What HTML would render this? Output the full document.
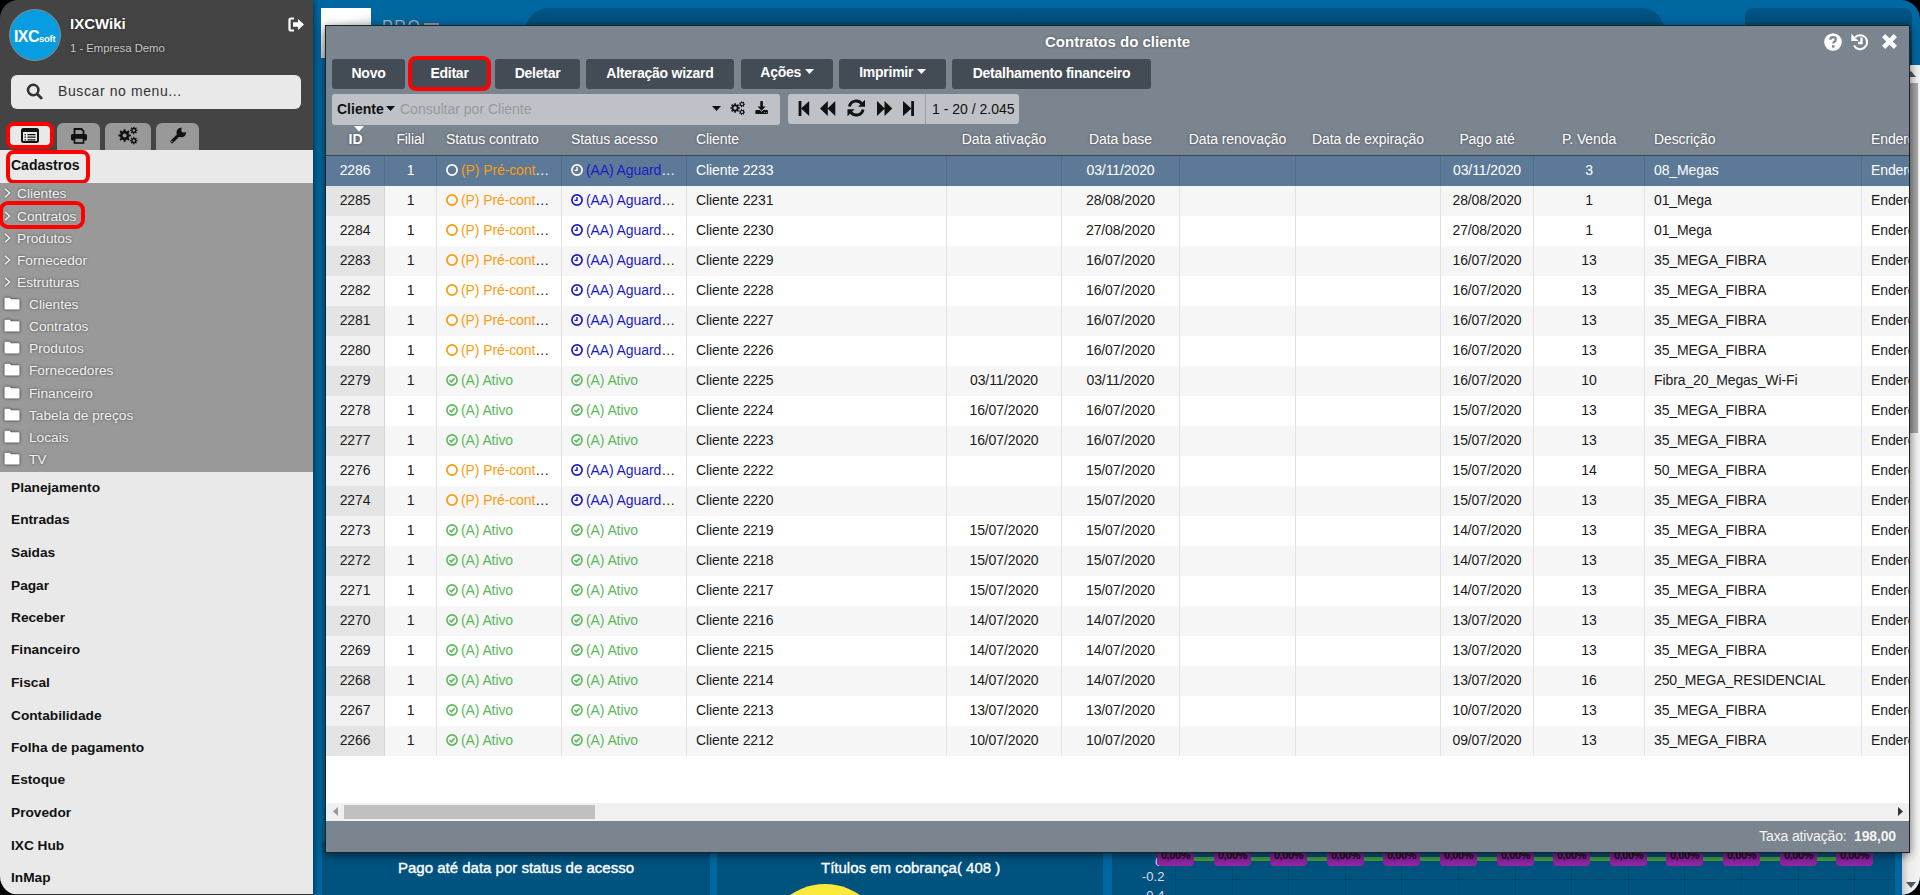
<!DOCTYPE html>
<html><head><meta charset="utf-8">
<style>
*{box-sizing:border-box}
html,body{margin:0;padding:0;width:1920px;height:895px;overflow:hidden;background:#000;font-family:"Liberation Sans",sans-serif}
#scr{position:absolute;left:0;top:0;width:1920px;height:895px;border-radius:19px;overflow:hidden;background:#0067a0}
.abs{position:absolute}
/* sidebar */
#side{position:absolute;left:0;top:0;width:313px;height:895px;background:#444;box-shadow:0 0 7px rgba(0,0,0,.7)}
.logo{position:absolute;left:9px;top:9px;width:52px;height:52px;border-radius:50%;background:#089ce0;border:1px solid #8a8a8a}
.si{position:absolute;font-size:13.7px;color:#f2f2f2;line-height:18px;text-shadow:0 0 3px rgba(0,0,0,.55);white-space:nowrap}
.chev{position:absolute;left:4px;filter:drop-shadow(0 0 1px rgba(0,0,0,.5))}
.fold{position:absolute;left:4px;width:16px;height:13px;filter:drop-shadow(0 0.5px 1.5px rgba(0,0,0,.75))}
.fold svg{display:block}
.mi{position:absolute;left:11px;font-size:13.7px;font-weight:bold;color:#111;line-height:18px;white-space:nowrap}
.tab{position:absolute;top:123px;height:27px;border-radius:6px 6px 0 0;background:#999}
/* modal */
#modal{position:absolute;left:325px;top:25px;width:1585px;height:828px;background:#7b858f;border:1px solid #1d2227;box-shadow:0 2px 9px rgba(0,0,0,.55)}
.btn{position:absolute;top:33px;height:30px;background:#434b55;border-radius:3px;color:#fff;font-size:14px;font-weight:bold;text-align:center;line-height:29px;white-space:nowrap;letter-spacing:-0.25px}
.h{position:absolute;top:0;height:30px;border-left:1px solid transparent;line-height:28px;font-size:14px;letter-spacing:-0.1px;color:#fff;text-shadow:0 0 3px rgba(0,0,0,.45);white-space:nowrap;overflow:hidden}
.c{position:absolute;top:0;height:30px;line-height:29px;font-size:14px;letter-spacing:-0.1px;color:#1a1a1a;white-space:nowrap;overflow:hidden;text-overflow:ellipsis}
.bl{border-left:1px solid #e2e2e2}
.b1{border-left-color:#d6d6d6}
.ctr{text-align:center}
.lft{text-align:left;padding:0 9px}
.b{font-weight:bold}
.row{position:absolute;left:0;width:1600px;height:30px}
.odd{background:#f6f6f6}
.even{background:#fff}
.odd .idc{background:#e4e4e4}
.even .idc{background:#f1f1f1}
.sel{background:#5c7997}
.sel .c{color:#fff;border-left-color:#526e8b}
.ic{display:inline-block;vertical-align:-1px;margin-right:3px}
.plab{position:absolute;top:846px;width:37px;height:20px;border-radius:4px;background:linear-gradient(#6f1a86,#9526a8);color:#111;font-size:11px;font-weight:bold;text-align:center;line-height:18px;letter-spacing:-0.4px}
</style></head><body>
<div id="scr">
  <!-- dashboard background -->
  <div class="abs" style="left:526px;top:8px;width:1138px;height:60px;border-radius:22px 22px 0 0;background:linear-gradient(#015586,#003a5a)"></div>
  <div class="abs" style="left:1745px;top:8px;width:167px;height:60px;border-radius:8px 8px 0 0;background:linear-gradient(#015586,#003a5a)"></div>
  <div class="abs" style="left:321px;top:8px;width:50px;height:50px;background:linear-gradient(160deg,#fff 30%,#b5b5b5)"></div>
  <div class="abs" style="left:382px;top:17px;font-size:16px;line-height:20px;color:#a9b0b8;letter-spacing:1.6px;white-space:nowrap">PRO</div><div class="abs" style="left:424px;top:23px;width:15px;height:2px;background:#8f98a2"></div>
  <div class="abs" style="left:322px;top:840px;width:388px;height:70px;border-radius:4px;background:#00527f"></div>
  <div class="abs" style="left:717px;top:840px;width:386px;height:70px;border-radius:4px;background:#00527f"></div>
  <div class="abs" style="left:1112px;top:840px;width:783px;height:70px;border-radius:4px;background:#00527f"></div>
  <div class="abs" style="left:398px;top:859px;font-size:15px;color:#fff;white-space:nowrap;-webkit-text-stroke:0.35px #fff">Pago até data por status de acesso</div>
  <div class="abs" style="left:821px;top:859px;font-size:15px;color:#fff;white-space:nowrap;-webkit-text-stroke:0.35px #fff">Títulos em cobrança( 408 )</div>
  <div class="abs" style="left:764px;top:884px;width:122px;height:122px;border-radius:50%;background:#fde93a"></div>
  <div style="position:absolute;left:1175px;top:852px;width:1px;height:43px;background:rgba(0,0,0,0.12)"></div><div style="position:absolute;left:1232px;top:852px;width:1px;height:43px;background:rgba(0,0,0,0.12)"></div><div style="position:absolute;left:1288px;top:852px;width:1px;height:43px;background:rgba(0,0,0,0.12)"></div><div style="position:absolute;left:1345px;top:852px;width:1px;height:43px;background:rgba(0,0,0,0.12)"></div><div style="position:absolute;left:1401px;top:852px;width:1px;height:43px;background:rgba(0,0,0,0.12)"></div><div style="position:absolute;left:1458px;top:852px;width:1px;height:43px;background:rgba(0,0,0,0.12)"></div><div style="position:absolute;left:1515px;top:852px;width:1px;height:43px;background:rgba(0,0,0,0.12)"></div><div style="position:absolute;left:1571px;top:852px;width:1px;height:43px;background:rgba(0,0,0,0.12)"></div><div style="position:absolute;left:1628px;top:852px;width:1px;height:43px;background:rgba(0,0,0,0.12)"></div><div style="position:absolute;left:1684px;top:852px;width:1px;height:43px;background:rgba(0,0,0,0.12)"></div><div style="position:absolute;left:1741px;top:852px;width:1px;height:43px;background:rgba(0,0,0,0.12)"></div><div style="position:absolute;left:1798px;top:852px;width:1px;height:43px;background:rgba(0,0,0,0.12)"></div><div style="position:absolute;left:1854px;top:852px;width:1px;height:43px;background:rgba(0,0,0,0.12)"></div>
  <div class="abs" style="left:1175px;top:879px;width:720px;height:1px;background:rgba(0,0,0,0.12)"></div>
  <div class="abs" style="left:1175px;top:857px;width:695px;height:4px;background:#479a3a"></div>
  <div class="abs" style="left:1155px;top:854px;font-size:13px;color:#dde;white-space:nowrap">0</div>
  <div class="plab" style="left:1157px">0,00%</div><div class="plab" style="left:1214px">0,00%</div><div class="plab" style="left:1270px">0,00%</div><div class="plab" style="left:1327px">0,00%</div><div class="plab" style="left:1383px">0,00%</div><div class="plab" style="left:1440px">0,00%</div><div class="plab" style="left:1497px">0,00%</div><div class="plab" style="left:1553px">0,00%</div><div class="plab" style="left:1610px">0,00%</div><div class="plab" style="left:1666px">0,00%</div><div class="plab" style="left:1723px">0,00%</div><div class="plab" style="left:1780px">0,00%</div><div class="plab" style="left:1836px">0,00%</div>
  <div class="abs" style="left:1142px;top:869px;font-size:13px;color:#dde;white-space:nowrap">-0.2</div>
  <div class="abs" style="left:1142px;top:888px;font-size:13px;color:#dde;white-space:nowrap">-0.4</div>
  <!-- page scrollbar -->
  <div class="abs" style="left:1902px;top:65px;width:18px;height:830px;background:linear-gradient(90deg,#c8c8c8,#ececec 40%,#f4f4f4)"></div>
  <svg class="abs" style="left:1906px;top:71px" width="10" height="6" viewBox="0 0 10 6"><path d="M0 6H10L5 0Z" fill="#555"/></svg>
  <svg class="abs" style="left:1906px;top:882px" width="10" height="6" viewBox="0 0 10 6"><path d="M0 0H10L5 6Z" fill="#555"/></svg>
  <div class="abs" style="left:1904px;top:83px;width:14px;height:350px;background:linear-gradient(90deg,#8e8e8e,#a9a9a9)"></div>

  <!-- sidebar -->
  <div id="side">
    <div class="logo"></div>
    <div class="abs" style="left:14px;top:29px;width:46px;font-size:16px;line-height:16px;font-weight:bold;color:#fff;letter-spacing:-0.6px;white-space:nowrap">IXC<span style="font-size:9.5px;font-weight:bold;letter-spacing:-0.2px">soft</span></div>
    <div class="abs" style="left:70px;top:15px;font-size:15px;font-weight:bold;color:#fff;text-shadow:0 0 3px rgba(0,0,0,.6)">IXCWiki</div>
    <div class="abs" style="left:70px;top:42px;font-size:11.3px;color:#c8c8c8;text-shadow:0 0 3px rgba(0,0,0,.6);white-space:nowrap">1 - Empresa Demo</div>
    <svg class="abs" style="left:288px;top:17px" width="17" height="15" viewBox="0 0 17 15"><path d="M6 1.5H3Q1.5 1.5 1.5 3V12Q1.5 13.5 3 13.5H6" fill="none" stroke="#fff" stroke-width="2.2"/><path d="M5 5.3H10V2L16 7.5L10 13V9.7H5Z" fill="#fff"/></svg>
    <div class="abs" style="left:11px;top:75px;width:290px;height:34px;border-radius:6px;background:#e9e9e9"></div>
    <svg class="abs" style="left:26px;top:83px" width="17" height="17" viewBox="0 0 17 17"><circle cx="7.2" cy="7" r="5.2" fill="none" stroke="#333" stroke-width="2.6"/><path d="M11.2 11L15.2 15" stroke="#333" stroke-width="2.8" stroke-linecap="round"/></svg>
    <div class="abs" style="left:58px;top:83px;font-size:14px;color:#333;letter-spacing:0.6px;white-space:nowrap">Buscar no menu...</div>
    <!-- tabs -->
    <div class="tab" style="left:57px;width:43px"></div>
    <div class="tab" style="left:105px;width:46px"></div>
    <div class="tab" style="left:156px;width:43px"></div>
    <div class="abs" style="left:6px;top:122px;width:48px;height:27px;border:4px solid #f00;border-radius:8px;background:#e9e9e9"></div>
    <svg class="abs" style="left:21px;top:128px" width="18" height="15" viewBox="0 0 18 15"><rect x="1" y="1" width="16" height="13" rx="1.5" fill="none" stroke="#111" stroke-width="2"/><rect x="1" y="1" width="16" height="3" fill="#111"/><path d="M3.5 6.6H4.8M6.5 6.6H14.5M3.5 9.2H4.8M6.5 9.2H14.5M3.5 11.8H4.8M6.5 11.8H14.5" stroke="#111" stroke-width="1.3"/></svg>
    <svg class="abs" style="left:70px;top:128px" width="18" height="16" viewBox="0 0 18 16"><path d="M4.5 6V1H11.5L13.5 3V6" fill="none" stroke="#111" stroke-width="1.8"/><rect x="1" y="6" width="16" height="6.5" rx="1.5" fill="#111"/><rect x="4.5" y="10" width="9" height="5" fill="#999" stroke="#111" stroke-width="1.6"/></svg>
    <svg class="abs" style="left:118px;top:126px" width="20" height="19" viewBox="0 0 20 19"><path d="M11.08 8.46 L12.81 8.47 L12.81 10.53 L11.08 10.54 L10.50 11.93 L11.73 13.16 L10.26 14.63 L9.03 13.40 L7.64 13.98 L7.63 15.71 L5.57 15.71 L5.56 13.98 L4.17 13.40 L2.94 14.63 L1.47 13.16 L2.70 11.93 L2.12 10.54 L0.39 10.53 L0.39 8.47 L2.12 8.46 L2.70 7.07 L1.47 5.84 L2.94 4.37 L4.17 5.60 L5.56 5.02 L5.57 3.29 L7.63 3.29 L7.64 5.02 L9.03 5.60 L10.26 4.37 L11.73 5.84 L10.50 7.07Z" fill="#111"/><circle cx="6.6" cy="9.5" r="2.0" fill="#999"/><path d="M18.43 3.79 L19.55 3.78 L19.55 5.02 L18.43 5.01 L18.09 5.83 L18.89 6.61 L18.01 7.49 L17.23 6.69 L16.41 7.03 L16.42 8.15 L15.18 8.15 L15.19 7.03 L14.37 6.69 L13.59 7.49 L12.71 6.61 L13.51 5.83 L13.17 5.01 L12.05 5.02 L12.05 3.78 L13.17 3.79 L13.51 2.97 L12.71 2.19 L13.59 1.31 L14.37 2.11 L15.19 1.77 L15.18 0.65 L16.42 0.65 L16.41 1.77 L17.23 2.11 L18.01 1.31 L18.89 2.19 L18.09 2.97Z" fill="#111"/><circle cx="15.8" cy="4.4" r="1.2" fill="#999"/><path d="M18.43 13.99 L19.55 13.98 L19.55 15.22 L18.43 15.21 L18.09 16.03 L18.89 16.81 L18.01 17.69 L17.23 16.89 L16.41 17.23 L16.42 18.35 L15.18 18.35 L15.19 17.23 L14.37 16.89 L13.59 17.69 L12.71 16.81 L13.51 16.03 L13.17 15.21 L12.05 15.22 L12.05 13.98 L13.17 13.99 L13.51 13.17 L12.71 12.39 L13.59 11.51 L14.37 12.31 L15.19 11.97 L15.18 10.85 L16.42 10.85 L16.41 11.97 L17.23 12.31 L18.01 11.51 L18.89 12.39 L18.09 13.17Z" fill="#111"/><circle cx="15.8" cy="14.6" r="1.2" fill="#999"/></svg>
    <svg class="abs" style="left:169px;top:127px" width="18" height="18" viewBox="0 0 18 18"><path d="M11.5 6.2L3 14.7" stroke="#111" stroke-width="3.2" stroke-linecap="round"/><circle cx="12.3" cy="5.5" r="4.8" fill="#111"/><circle cx="15.2" cy="2.7" r="2.9" fill="#999"/><circle cx="2.9" cy="14.8" r="0.75" fill="#999"/></svg>
    <!-- cadastros -->
    <div class="abs" style="left:0;top:150px;width:313px;height:33px;background:#e9e9e9"></div>
    <div class="abs" style="left:6px;top:150px;width:84px;height:34px;border:4px solid #f00;border-radius:8px"></div>
    <div class="abs" style="left:11px;top:157px;font-size:14px;font-weight:bold;color:#111">Cadastros</div>
    <div class="abs" style="left:0;top:183px;width:313px;height:289px;background:#999">
      <div class="si" style="top:2px;left:17px">Clientes</div><svg class="chev" style="top:5px" width="7" height="10" viewBox="0 0 7 10"><path d="M1 0.8L5.6 5L1 9.2" fill="none" stroke="#f2f2f2" stroke-width="1.4"/></svg>
<div class="si" style="top:25px;left:17px">Contratos</div><svg class="chev" style="top:28px" width="7" height="10" viewBox="0 0 7 10"><path d="M1 0.8L5.6 5L1 9.2" fill="none" stroke="#f2f2f2" stroke-width="1.4"/></svg>
<div class="si" style="top:47px;left:17px">Produtos</div><svg class="chev" style="top:50px" width="7" height="10" viewBox="0 0 7 10"><path d="M1 0.8L5.6 5L1 9.2" fill="none" stroke="#f2f2f2" stroke-width="1.4"/></svg>
<div class="si" style="top:69px;left:17px">Fornecedor</div><svg class="chev" style="top:72px" width="7" height="10" viewBox="0 0 7 10"><path d="M1 0.8L5.6 5L1 9.2" fill="none" stroke="#f2f2f2" stroke-width="1.4"/></svg>
<div class="si" style="top:91px;left:17px">Estruturas</div><svg class="chev" style="top:94px" width="7" height="10" viewBox="0 0 7 10"><path d="M1 0.8L5.6 5L1 9.2" fill="none" stroke="#f2f2f2" stroke-width="1.4"/></svg>
<div class="si" style="top:113px;left:29px">Clientes</div><div class="fold" style="top:114px"><svg width="16" height="13" viewBox="0 0 16 13"><path d="M0.5 2.2Q0.5 0.8 1.8 0.8H5.6L7.1 2.3H14.2Q15.5 2.3 15.5 3.6V11.4Q15.5 12.5 14.3 12.5H1.7Q0.5 12.5 0.5 11.3Z" fill="#fff"/></svg></div>
<div class="si" style="top:135px;left:29px">Contratos</div><div class="fold" style="top:136px"><svg width="16" height="13" viewBox="0 0 16 13"><path d="M0.5 2.2Q0.5 0.8 1.8 0.8H5.6L7.1 2.3H14.2Q15.5 2.3 15.5 3.6V11.4Q15.5 12.5 14.3 12.5H1.7Q0.5 12.5 0.5 11.3Z" fill="#fff"/></svg></div>
<div class="si" style="top:157px;left:29px">Produtos</div><div class="fold" style="top:158px"><svg width="16" height="13" viewBox="0 0 16 13"><path d="M0.5 2.2Q0.5 0.8 1.8 0.8H5.6L7.1 2.3H14.2Q15.5 2.3 15.5 3.6V11.4Q15.5 12.5 14.3 12.5H1.7Q0.5 12.5 0.5 11.3Z" fill="#fff"/></svg></div>
<div class="si" style="top:179px;left:29px">Fornecedores</div><div class="fold" style="top:180px"><svg width="16" height="13" viewBox="0 0 16 13"><path d="M0.5 2.2Q0.5 0.8 1.8 0.8H5.6L7.1 2.3H14.2Q15.5 2.3 15.5 3.6V11.4Q15.5 12.5 14.3 12.5H1.7Q0.5 12.5 0.5 11.3Z" fill="#fff"/></svg></div>
<div class="si" style="top:202px;left:29px">Financeiro</div><div class="fold" style="top:203px"><svg width="16" height="13" viewBox="0 0 16 13"><path d="M0.5 2.2Q0.5 0.8 1.8 0.8H5.6L7.1 2.3H14.2Q15.5 2.3 15.5 3.6V11.4Q15.5 12.5 14.3 12.5H1.7Q0.5 12.5 0.5 11.3Z" fill="#fff"/></svg></div>
<div class="si" style="top:224px;left:29px">Tabela de preços</div><div class="fold" style="top:225px"><svg width="16" height="13" viewBox="0 0 16 13"><path d="M0.5 2.2Q0.5 0.8 1.8 0.8H5.6L7.1 2.3H14.2Q15.5 2.3 15.5 3.6V11.4Q15.5 12.5 14.3 12.5H1.7Q0.5 12.5 0.5 11.3Z" fill="#fff"/></svg></div>
<div class="si" style="top:246px;left:29px">Locais</div><div class="fold" style="top:247px"><svg width="16" height="13" viewBox="0 0 16 13"><path d="M0.5 2.2Q0.5 0.8 1.8 0.8H5.6L7.1 2.3H14.2Q15.5 2.3 15.5 3.6V11.4Q15.5 12.5 14.3 12.5H1.7Q0.5 12.5 0.5 11.3Z" fill="#fff"/></svg></div>
<div class="si" style="top:268px;left:29px">TV</div><div class="fold" style="top:269px"><svg width="16" height="13" viewBox="0 0 16 13"><path d="M0.5 2.2Q0.5 0.8 1.8 0.8H5.6L7.1 2.3H14.2Q15.5 2.3 15.5 3.6V11.4Q15.5 12.5 14.3 12.5H1.7Q0.5 12.5 0.5 11.3Z" fill="#fff"/></svg></div>
    </div>
    <div class="abs" style="left:-1px;top:201px;width:86px;height:28px;border:4px solid #f00;border-radius:9px"></div>
    <div class="abs" style="left:0;top:894px;width:313px;height:1px;background:#333"></div>
    <div class="abs" style="left:0;top:472px;width:313px;height:422px;background:#e9e9e9">
      <div class="mi" style="top:7px">Planejamento</div><div class="mi" style="top:39px">Entradas</div><div class="mi" style="top:72px">Saidas</div><div class="mi" style="top:105px">Pagar</div><div class="mi" style="top:137px">Receber</div><div class="mi" style="top:169px">Financeiro</div><div class="mi" style="top:202px">Fiscal</div><div class="mi" style="top:235px">Contabilidade</div><div class="mi" style="top:267px">Folha de pagamento</div><div class="mi" style="top:299px">Estoque</div><div class="mi" style="top:332px">Provedor</div><div class="mi" style="top:365px">IXC Hub</div><div class="mi" style="top:397px">InMap</div>
    </div>
  </div>

  <!-- modal -->
  <div id="modal">
    <div class="abs" style="left:719px;top:7px;font-size:15px;font-weight:bold;color:#fff;text-shadow:0 0 3px rgba(0,0,0,.4);white-space:nowrap">Contratos do cliente</div>
    <svg class="abs" style="left:1497.5px;top:7px" width="18" height="18" viewBox="0 0 18 18"><circle cx="9" cy="9" r="8.8" fill="#fff"/><path d="M6.3 6.8Q6.3 4.2 9.1 4.2Q11.8 4.2 11.8 6.5Q11.8 8 10.2 8.9Q9.2 9.5 9.2 10.6" fill="none" stroke="#7b858f" stroke-width="2.2"/><rect x="7.9" y="12.2" width="2.6" height="2.4" fill="#7b858f"/></svg>
    <svg class="abs" style="left:1525px;top:7px" width="19" height="18" viewBox="0 0 19 18"><path d="M4.2 4.2A7 7 0 1 1 3 12.5" fill="none" stroke="#fff" stroke-width="2"/><path d="M0.3 0.8V8H7.5Z" fill="#fff"/><path d="M10.5 4.6V10H7" fill="none" stroke="#fff" stroke-width="2.3"/></svg>
    <svg class="abs" style="left:1555px;top:7px" width="17" height="17" viewBox="0 0 17 17"><path d="M2.6 2.6L14.4 14.4M14.4 2.6L2.6 14.4" stroke="#fff" stroke-width="4.5"/></svg>

    <div class="btn" style="left:6px;width:73px">Novo</div>
    <div class="btn" style="left:86px;width:75px">Editar</div>
    <div class="abs" style="left:82px;top:30px;width:83px;height:35px;border:4px solid #f00;border-radius:8px"></div>
    <div class="btn" style="left:169px;width:85px">Deletar</div>
    <div class="btn" style="left:260px;width:148px">Alteração wizard</div>
    <div class="btn" style="left:415px;width:92px;line-height:27px">Ações <svg width="9" height="6" viewBox="0 0 9 6" style="vertical-align:2px"><path d="M0 0H9L4.5 5Z" fill="#fff"/></svg></div>
    <div class="btn" style="left:513px;width:107px;line-height:27px">Imprimir <svg width="9" height="6" viewBox="0 0 9 6" style="vertical-align:2px"><path d="M0 0H9L4.5 5Z" fill="#fff"/></svg></div>
    <div class="btn" style="left:626px;width:199px">Detalhamento financeiro</div>

    <!-- filter bar -->
    <div class="abs" style="left:6px;top:68px;width:448px;height:31px;border-radius:3px;background:#bec2c6"></div>
    <div class="abs" style="left:11px;top:75px;font-size:14px;font-weight:bold;color:#111">Cliente</div>
    <svg class="abs" style="left:60px;top:80px" width="9" height="6" viewBox="0 0 9 6"><path d="M0 0H9L4.5 5Z" fill="#111"/></svg>
    <div class="abs" style="left:74px;top:75px;font-size:14px;color:#999;white-space:nowrap">Consultar por Cliente</div>
    <svg class="abs" style="left:386px;top:80px" width="9" height="6" viewBox="0 0 9 6"><path d="M0 0H9L4.5 5Z" fill="#111"/></svg>
    <svg class="abs" style="left:404px;top:74px" width="16" height="16" viewBox="0 0 16 16"><path d="M8.60 7.15 L9.92 7.14 L9.92 8.86 L8.60 8.85 L8.18 9.87 L9.12 10.80 L7.90 12.02 L6.97 11.08 L5.95 11.50 L5.96 12.82 L4.24 12.82 L4.25 11.50 L3.23 11.08 L2.30 12.02 L1.08 10.80 L2.02 9.87 L1.60 8.85 L0.28 8.86 L0.28 7.14 L1.60 7.15 L2.02 6.13 L1.08 5.20 L2.30 3.98 L3.23 4.92 L4.25 4.50 L4.24 3.18 L5.96 3.18 L5.95 4.50 L6.97 4.92 L7.90 3.98 L9.12 5.20 L8.18 6.13Z" fill="#111"/><circle cx="5.1" cy="8.0" r="1.7" fill="#bec2c6"/><path d="M14.13 3.63 L14.95 3.64 L14.95 4.76 L14.13 4.77 L13.77 5.51 L14.28 6.15 L13.40 6.85 L12.88 6.22 L12.08 6.40 L11.89 7.20 L10.80 6.95 L10.97 6.15 L10.33 5.63 L9.59 5.99 L9.10 4.97 L9.84 4.61 L9.84 3.79 L9.10 3.43 L9.59 2.41 L10.33 2.77 L10.97 2.25 L10.80 1.45 L11.89 1.20 L12.08 2.00 L12.88 2.18 L13.40 1.55 L14.28 2.25 L13.77 2.89Z" fill="#111"/><circle cx="12.0" cy="4.2" r="1.1" fill="#bec2c6"/><path d="M14.13 11.53 L14.95 11.54 L14.95 12.66 L14.13 12.67 L13.77 13.41 L14.28 14.05 L13.40 14.75 L12.88 14.12 L12.08 14.30 L11.89 15.10 L10.80 14.85 L10.97 14.05 L10.33 13.53 L9.59 13.89 L9.10 12.87 L9.84 12.51 L9.84 11.69 L9.10 11.33 L9.59 10.31 L10.33 10.67 L10.97 10.15 L10.80 9.35 L11.89 9.10 L12.08 9.90 L12.88 10.08 L13.40 9.45 L14.28 10.15 L13.77 10.79Z" fill="#111"/><circle cx="12.0" cy="12.1" r="1.1" fill="#bec2c6"/></svg>
    <svg class="abs" style="left:428px;top:75px" width="16" height="15" viewBox="0 0 16 15"><path d="M7.6 1V6.5" stroke="#111" stroke-width="2.6" stroke-linecap="round"/><path d="M3.5 5.6H11.7L7.6 9.7Z" fill="#111"/><path d="M1.3 10.2Q1.3 9 2.5 9H5.8L7.6 10.8L9.4 9H12.8Q14 9 14 10.2V12Q14 13 13 13H2.3Q1.3 13 1.3 12Z" fill="#111"/><circle cx="10.6" cy="11.4" r="0.5" fill="#bec2c6"/><circle cx="12.3" cy="11.4" r="0.5" fill="#bec2c6"/></svg>
    <!-- pagination -->
    <div class="abs" style="left:462px;top:68px;width:231px;height:30px;border-radius:3px;background:#bec2c6"></div>
    <div class="abs" style="left:599px;top:68px;width:1px;height:30px;background:#9aa0a6"></div>
    <svg class="abs" style="left:472px;top:75px" width="13" height="15" viewBox="0 0 13 15"><rect x="0.6" y="0" width="2.8" height="15" fill="#111"/><path d="M11.2 0V15L3 7.5Z" fill="#111"/></svg>
    <svg class="abs" style="left:494px;top:75px" width="17" height="15" viewBox="0 0 17 15"><path d="M7.8 0V15L0 7.5Z M15.3 0V15L7.5 7.5Z" fill="#111"/></svg>
    <svg class="abs" style="left:521px;top:73px" width="19" height="18" viewBox="0 0 19 18"><path d="M2.4 7.6A6.9 6.9 0 0 1 14.6 4.6" fill="none" stroke="#111" stroke-width="2.9"/><path d="M18 0.8V7.8H11Z" fill="#111"/><path d="M16.1 10.4A6.9 6.9 0 0 1 3.9 13.4" fill="none" stroke="#111" stroke-width="2.9"/><path d="M0.5 17.2V10.2H7.5Z" fill="#111"/></svg>
    <svg class="abs" style="left:551px;top:75px" width="17" height="15" viewBox="0 0 17 15"><path d="M0 0V15L7.8 7.5Z M7.5 0V15L15.3 7.5Z" fill="#111"/></svg>
    <svg class="abs" style="left:577px;top:75px" width="13" height="15" viewBox="0 0 13 15"><rect x="8.2" y="0" width="2.8" height="15" fill="#111"/><path d="M0 0V15L8.4 7.5Z" fill="#111"/></svg>
    <div class="abs" style="left:606px;top:75px;font-size:14px;color:#111;white-space:nowrap">1 - 20 / 2.045</div>

    <!-- sort arrow -->
    <svg class="abs" style="left:28px;top:99.5px" width="10" height="6" viewBox="0 0 10 6"><path d="M0 0H10L5 5.5Z" fill="#fff"/></svg>
    <!-- header -->
    <div class="abs" style="left:0;top:99px;width:1583px;height:31px;overflow:hidden"><div class="h ctr b" style="left:0px;width:58px">ID</div><div class="h ctr" style="left:58px;width:52px">Filial</div><div class="h lft" style="left:110px;width:125px">Status contrato</div><div class="h lft" style="left:235px;width:125px">Status acesso</div><div class="h lft" style="left:360px;width:260px">Cliente</div><div class="h ctr" style="left:620px;width:115px">Data ativação</div><div class="h ctr" style="left:735px;width:118px">Data base</div><div class="h ctr" style="left:853px;width:116px">Data renovação</div><div class="h ctr" style="left:969px;width:145px">Data de expiração</div><div class="h ctr" style="left:1114px;width:93px">Pago até</div><div class="h ctr" style="left:1207px;width:111px">P. Venda</div><div class="h lft" style="left:1318px;width:217px">Descrição</div><div class="h lft" style="left:1535px;width:239px">Endereço</div></div>
    <div class="abs" style="left:0;top:129px;width:1583px;height:1px;background:#3c4650"></div>
    <!-- body -->
    <div class="abs" style="left:0;top:130px;width:1583px;height:648px;background:#fff;overflow:hidden">
<div class="row sel" style="top:0px"><div class="c ctr idc" style="left:0px;width:58px;">2286</div><div class="c bl b1 ctr" style="left:58px;width:52px;">1</div><div class="c bl lft" style="left:110px;width:125px;"><svg class="ic" width="12" height="12" viewBox="0 0 12 12"><circle cx="6" cy="6" r="5.1" fill="none" stroke="#fff" stroke-width="1.7"/></svg><span style="color:#fc9b10">(P) Pré-contrato</span></div><div class="c bl lft" style="left:235px;width:125px;"><svg class="ic" width="12" height="12" viewBox="0 0 12 12"><circle cx="6" cy="6" r="5.1" fill="none" stroke="#fff" stroke-width="1.7"/><path d="M6 3V6.4H3.6" fill="none" stroke="#fff" stroke-width="1.4"/></svg><span style="color:#1b1bc4">(AA) Aguardando assinatura</span></div><div class="c bl lft" style="left:360px;width:260px;">Cliente 2233</div><div class="c bl ctr" style="left:620px;width:115px;"></div><div class="c bl ctr" style="left:735px;width:118px;">03/11/2020</div><div class="c bl ctr" style="left:853px;width:116px;"></div><div class="c bl ctr" style="left:969px;width:145px;"></div><div class="c bl ctr" style="left:1114px;width:93px;">03/11/2020</div><div class="c bl ctr" style="left:1207px;width:111px;">3</div><div class="c bl lft" style="left:1318px;width:217px;">08_Megas</div><div class="c bl lft" style="left:1535px;width:239px;">Endereço</div></div>
<div class="row odd" style="top:30px"><div class="c ctr idc" style="left:0px;width:58px;">2285</div><div class="c bl b1 ctr" style="left:58px;width:52px;">1</div><div class="c bl lft" style="left:110px;width:125px;"><svg class="ic" width="12" height="12" viewBox="0 0 12 12"><circle cx="6" cy="6" r="5.1" fill="none" stroke="#fc9b10" stroke-width="1.7"/></svg><span style="color:#fc9b10">(P) Pré-contrato</span></div><div class="c bl lft" style="left:235px;width:125px;"><svg class="ic" width="12" height="12" viewBox="0 0 12 12"><circle cx="6" cy="6" r="5.1" fill="none" stroke="#1b1bc4" stroke-width="1.7"/><path d="M6 3V6.4H3.6" fill="none" stroke="#1b1bc4" stroke-width="1.4"/></svg><span style="color:#1b1bc4">(AA) Aguardando assinatura</span></div><div class="c bl lft" style="left:360px;width:260px;">Cliente 2231</div><div class="c bl ctr" style="left:620px;width:115px;"></div><div class="c bl ctr" style="left:735px;width:118px;">28/08/2020</div><div class="c bl ctr" style="left:853px;width:116px;"></div><div class="c bl ctr" style="left:969px;width:145px;"></div><div class="c bl ctr" style="left:1114px;width:93px;">28/08/2020</div><div class="c bl ctr" style="left:1207px;width:111px;">1</div><div class="c bl lft" style="left:1318px;width:217px;">01_Mega</div><div class="c bl lft" style="left:1535px;width:239px;">Endereço</div></div>
<div class="row even" style="top:60px"><div class="c ctr idc" style="left:0px;width:58px;">2284</div><div class="c bl b1 ctr" style="left:58px;width:52px;">1</div><div class="c bl lft" style="left:110px;width:125px;"><svg class="ic" width="12" height="12" viewBox="0 0 12 12"><circle cx="6" cy="6" r="5.1" fill="none" stroke="#fc9b10" stroke-width="1.7"/></svg><span style="color:#fc9b10">(P) Pré-contrato</span></div><div class="c bl lft" style="left:235px;width:125px;"><svg class="ic" width="12" height="12" viewBox="0 0 12 12"><circle cx="6" cy="6" r="5.1" fill="none" stroke="#1b1bc4" stroke-width="1.7"/><path d="M6 3V6.4H3.6" fill="none" stroke="#1b1bc4" stroke-width="1.4"/></svg><span style="color:#1b1bc4">(AA) Aguardando assinatura</span></div><div class="c bl lft" style="left:360px;width:260px;">Cliente 2230</div><div class="c bl ctr" style="left:620px;width:115px;"></div><div class="c bl ctr" style="left:735px;width:118px;">27/08/2020</div><div class="c bl ctr" style="left:853px;width:116px;"></div><div class="c bl ctr" style="left:969px;width:145px;"></div><div class="c bl ctr" style="left:1114px;width:93px;">27/08/2020</div><div class="c bl ctr" style="left:1207px;width:111px;">1</div><div class="c bl lft" style="left:1318px;width:217px;">01_Mega</div><div class="c bl lft" style="left:1535px;width:239px;">Endereço</div></div>
<div class="row odd" style="top:90px"><div class="c ctr idc" style="left:0px;width:58px;">2283</div><div class="c bl b1 ctr" style="left:58px;width:52px;">1</div><div class="c bl lft" style="left:110px;width:125px;"><svg class="ic" width="12" height="12" viewBox="0 0 12 12"><circle cx="6" cy="6" r="5.1" fill="none" stroke="#fc9b10" stroke-width="1.7"/></svg><span style="color:#fc9b10">(P) Pré-contrato</span></div><div class="c bl lft" style="left:235px;width:125px;"><svg class="ic" width="12" height="12" viewBox="0 0 12 12"><circle cx="6" cy="6" r="5.1" fill="none" stroke="#1b1bc4" stroke-width="1.7"/><path d="M6 3V6.4H3.6" fill="none" stroke="#1b1bc4" stroke-width="1.4"/></svg><span style="color:#1b1bc4">(AA) Aguardando assinatura</span></div><div class="c bl lft" style="left:360px;width:260px;">Cliente 2229</div><div class="c bl ctr" style="left:620px;width:115px;"></div><div class="c bl ctr" style="left:735px;width:118px;">16/07/2020</div><div class="c bl ctr" style="left:853px;width:116px;"></div><div class="c bl ctr" style="left:969px;width:145px;"></div><div class="c bl ctr" style="left:1114px;width:93px;">16/07/2020</div><div class="c bl ctr" style="left:1207px;width:111px;">13</div><div class="c bl lft" style="left:1318px;width:217px;">35_MEGA_FIBRA</div><div class="c bl lft" style="left:1535px;width:239px;">Endereço</div></div>
<div class="row even" style="top:120px"><div class="c ctr idc" style="left:0px;width:58px;">2282</div><div class="c bl b1 ctr" style="left:58px;width:52px;">1</div><div class="c bl lft" style="left:110px;width:125px;"><svg class="ic" width="12" height="12" viewBox="0 0 12 12"><circle cx="6" cy="6" r="5.1" fill="none" stroke="#fc9b10" stroke-width="1.7"/></svg><span style="color:#fc9b10">(P) Pré-contrato</span></div><div class="c bl lft" style="left:235px;width:125px;"><svg class="ic" width="12" height="12" viewBox="0 0 12 12"><circle cx="6" cy="6" r="5.1" fill="none" stroke="#1b1bc4" stroke-width="1.7"/><path d="M6 3V6.4H3.6" fill="none" stroke="#1b1bc4" stroke-width="1.4"/></svg><span style="color:#1b1bc4">(AA) Aguardando assinatura</span></div><div class="c bl lft" style="left:360px;width:260px;">Cliente 2228</div><div class="c bl ctr" style="left:620px;width:115px;"></div><div class="c bl ctr" style="left:735px;width:118px;">16/07/2020</div><div class="c bl ctr" style="left:853px;width:116px;"></div><div class="c bl ctr" style="left:969px;width:145px;"></div><div class="c bl ctr" style="left:1114px;width:93px;">16/07/2020</div><div class="c bl ctr" style="left:1207px;width:111px;">13</div><div class="c bl lft" style="left:1318px;width:217px;">35_MEGA_FIBRA</div><div class="c bl lft" style="left:1535px;width:239px;">Endereço</div></div>
<div class="row odd" style="top:150px"><div class="c ctr idc" style="left:0px;width:58px;">2281</div><div class="c bl b1 ctr" style="left:58px;width:52px;">1</div><div class="c bl lft" style="left:110px;width:125px;"><svg class="ic" width="12" height="12" viewBox="0 0 12 12"><circle cx="6" cy="6" r="5.1" fill="none" stroke="#fc9b10" stroke-width="1.7"/></svg><span style="color:#fc9b10">(P) Pré-contrato</span></div><div class="c bl lft" style="left:235px;width:125px;"><svg class="ic" width="12" height="12" viewBox="0 0 12 12"><circle cx="6" cy="6" r="5.1" fill="none" stroke="#1b1bc4" stroke-width="1.7"/><path d="M6 3V6.4H3.6" fill="none" stroke="#1b1bc4" stroke-width="1.4"/></svg><span style="color:#1b1bc4">(AA) Aguardando assinatura</span></div><div class="c bl lft" style="left:360px;width:260px;">Cliente 2227</div><div class="c bl ctr" style="left:620px;width:115px;"></div><div class="c bl ctr" style="left:735px;width:118px;">16/07/2020</div><div class="c bl ctr" style="left:853px;width:116px;"></div><div class="c bl ctr" style="left:969px;width:145px;"></div><div class="c bl ctr" style="left:1114px;width:93px;">16/07/2020</div><div class="c bl ctr" style="left:1207px;width:111px;">13</div><div class="c bl lft" style="left:1318px;width:217px;">35_MEGA_FIBRA</div><div class="c bl lft" style="left:1535px;width:239px;">Endereço</div></div>
<div class="row even" style="top:180px"><div class="c ctr idc" style="left:0px;width:58px;">2280</div><div class="c bl b1 ctr" style="left:58px;width:52px;">1</div><div class="c bl lft" style="left:110px;width:125px;"><svg class="ic" width="12" height="12" viewBox="0 0 12 12"><circle cx="6" cy="6" r="5.1" fill="none" stroke="#fc9b10" stroke-width="1.7"/></svg><span style="color:#fc9b10">(P) Pré-contrato</span></div><div class="c bl lft" style="left:235px;width:125px;"><svg class="ic" width="12" height="12" viewBox="0 0 12 12"><circle cx="6" cy="6" r="5.1" fill="none" stroke="#1b1bc4" stroke-width="1.7"/><path d="M6 3V6.4H3.6" fill="none" stroke="#1b1bc4" stroke-width="1.4"/></svg><span style="color:#1b1bc4">(AA) Aguardando assinatura</span></div><div class="c bl lft" style="left:360px;width:260px;">Cliente 2226</div><div class="c bl ctr" style="left:620px;width:115px;"></div><div class="c bl ctr" style="left:735px;width:118px;">16/07/2020</div><div class="c bl ctr" style="left:853px;width:116px;"></div><div class="c bl ctr" style="left:969px;width:145px;"></div><div class="c bl ctr" style="left:1114px;width:93px;">16/07/2020</div><div class="c bl ctr" style="left:1207px;width:111px;">13</div><div class="c bl lft" style="left:1318px;width:217px;">35_MEGA_FIBRA</div><div class="c bl lft" style="left:1535px;width:239px;">Endereço</div></div>
<div class="row odd" style="top:210px"><div class="c ctr idc" style="left:0px;width:58px;">2279</div><div class="c bl b1 ctr" style="left:58px;width:52px;">1</div><div class="c bl lft" style="left:110px;width:125px;"><svg class="ic" width="12" height="12" viewBox="0 0 12 12"><circle cx="6" cy="6" r="5.1" fill="none" stroke="#5cb85c" stroke-width="1.6"/><path d="M3.5 6L5.3 7.8L8.6 4.4" fill="none" stroke="#5cb85c" stroke-width="1.6"/></svg><span style="color:#5cb85c">(A) Ativo</span></div><div class="c bl lft" style="left:235px;width:125px;"><svg class="ic" width="12" height="12" viewBox="0 0 12 12"><circle cx="6" cy="6" r="5.1" fill="none" stroke="#5cb85c" stroke-width="1.6"/><path d="M3.5 6L5.3 7.8L8.6 4.4" fill="none" stroke="#5cb85c" stroke-width="1.6"/></svg><span style="color:#5cb85c">(A) Ativo</span></div><div class="c bl lft" style="left:360px;width:260px;">Cliente 2225</div><div class="c bl ctr" style="left:620px;width:115px;">03/11/2020</div><div class="c bl ctr" style="left:735px;width:118px;">03/11/2020</div><div class="c bl ctr" style="left:853px;width:116px;"></div><div class="c bl ctr" style="left:969px;width:145px;"></div><div class="c bl ctr" style="left:1114px;width:93px;">16/07/2020</div><div class="c bl ctr" style="left:1207px;width:111px;">10</div><div class="c bl lft" style="left:1318px;width:217px;">Fibra_20_Megas_Wi-Fi</div><div class="c bl lft" style="left:1535px;width:239px;">Endereço</div></div>
<div class="row even" style="top:240px"><div class="c ctr idc" style="left:0px;width:58px;">2278</div><div class="c bl b1 ctr" style="left:58px;width:52px;">1</div><div class="c bl lft" style="left:110px;width:125px;"><svg class="ic" width="12" height="12" viewBox="0 0 12 12"><circle cx="6" cy="6" r="5.1" fill="none" stroke="#5cb85c" stroke-width="1.6"/><path d="M3.5 6L5.3 7.8L8.6 4.4" fill="none" stroke="#5cb85c" stroke-width="1.6"/></svg><span style="color:#5cb85c">(A) Ativo</span></div><div class="c bl lft" style="left:235px;width:125px;"><svg class="ic" width="12" height="12" viewBox="0 0 12 12"><circle cx="6" cy="6" r="5.1" fill="none" stroke="#5cb85c" stroke-width="1.6"/><path d="M3.5 6L5.3 7.8L8.6 4.4" fill="none" stroke="#5cb85c" stroke-width="1.6"/></svg><span style="color:#5cb85c">(A) Ativo</span></div><div class="c bl lft" style="left:360px;width:260px;">Cliente 2224</div><div class="c bl ctr" style="left:620px;width:115px;">16/07/2020</div><div class="c bl ctr" style="left:735px;width:118px;">16/07/2020</div><div class="c bl ctr" style="left:853px;width:116px;"></div><div class="c bl ctr" style="left:969px;width:145px;"></div><div class="c bl ctr" style="left:1114px;width:93px;">15/07/2020</div><div class="c bl ctr" style="left:1207px;width:111px;">13</div><div class="c bl lft" style="left:1318px;width:217px;">35_MEGA_FIBRA</div><div class="c bl lft" style="left:1535px;width:239px;">Endereço</div></div>
<div class="row odd" style="top:270px"><div class="c ctr idc" style="left:0px;width:58px;">2277</div><div class="c bl b1 ctr" style="left:58px;width:52px;">1</div><div class="c bl lft" style="left:110px;width:125px;"><svg class="ic" width="12" height="12" viewBox="0 0 12 12"><circle cx="6" cy="6" r="5.1" fill="none" stroke="#5cb85c" stroke-width="1.6"/><path d="M3.5 6L5.3 7.8L8.6 4.4" fill="none" stroke="#5cb85c" stroke-width="1.6"/></svg><span style="color:#5cb85c">(A) Ativo</span></div><div class="c bl lft" style="left:235px;width:125px;"><svg class="ic" width="12" height="12" viewBox="0 0 12 12"><circle cx="6" cy="6" r="5.1" fill="none" stroke="#5cb85c" stroke-width="1.6"/><path d="M3.5 6L5.3 7.8L8.6 4.4" fill="none" stroke="#5cb85c" stroke-width="1.6"/></svg><span style="color:#5cb85c">(A) Ativo</span></div><div class="c bl lft" style="left:360px;width:260px;">Cliente 2223</div><div class="c bl ctr" style="left:620px;width:115px;">16/07/2020</div><div class="c bl ctr" style="left:735px;width:118px;">16/07/2020</div><div class="c bl ctr" style="left:853px;width:116px;"></div><div class="c bl ctr" style="left:969px;width:145px;"></div><div class="c bl ctr" style="left:1114px;width:93px;">15/07/2020</div><div class="c bl ctr" style="left:1207px;width:111px;">13</div><div class="c bl lft" style="left:1318px;width:217px;">35_MEGA_FIBRA</div><div class="c bl lft" style="left:1535px;width:239px;">Endereço</div></div>
<div class="row even" style="top:300px"><div class="c ctr idc" style="left:0px;width:58px;">2276</div><div class="c bl b1 ctr" style="left:58px;width:52px;">1</div><div class="c bl lft" style="left:110px;width:125px;"><svg class="ic" width="12" height="12" viewBox="0 0 12 12"><circle cx="6" cy="6" r="5.1" fill="none" stroke="#fc9b10" stroke-width="1.7"/></svg><span style="color:#fc9b10">(P) Pré-contrato</span></div><div class="c bl lft" style="left:235px;width:125px;"><svg class="ic" width="12" height="12" viewBox="0 0 12 12"><circle cx="6" cy="6" r="5.1" fill="none" stroke="#1b1bc4" stroke-width="1.7"/><path d="M6 3V6.4H3.6" fill="none" stroke="#1b1bc4" stroke-width="1.4"/></svg><span style="color:#1b1bc4">(AA) Aguardando assinatura</span></div><div class="c bl lft" style="left:360px;width:260px;">Cliente 2222</div><div class="c bl ctr" style="left:620px;width:115px;"></div><div class="c bl ctr" style="left:735px;width:118px;">15/07/2020</div><div class="c bl ctr" style="left:853px;width:116px;"></div><div class="c bl ctr" style="left:969px;width:145px;"></div><div class="c bl ctr" style="left:1114px;width:93px;">15/07/2020</div><div class="c bl ctr" style="left:1207px;width:111px;">14</div><div class="c bl lft" style="left:1318px;width:217px;">50_MEGA_FIBRA</div><div class="c bl lft" style="left:1535px;width:239px;">Endereço</div></div>
<div class="row odd" style="top:330px"><div class="c ctr idc" style="left:0px;width:58px;">2274</div><div class="c bl b1 ctr" style="left:58px;width:52px;">1</div><div class="c bl lft" style="left:110px;width:125px;"><svg class="ic" width="12" height="12" viewBox="0 0 12 12"><circle cx="6" cy="6" r="5.1" fill="none" stroke="#fc9b10" stroke-width="1.7"/></svg><span style="color:#fc9b10">(P) Pré-contrato</span></div><div class="c bl lft" style="left:235px;width:125px;"><svg class="ic" width="12" height="12" viewBox="0 0 12 12"><circle cx="6" cy="6" r="5.1" fill="none" stroke="#1b1bc4" stroke-width="1.7"/><path d="M6 3V6.4H3.6" fill="none" stroke="#1b1bc4" stroke-width="1.4"/></svg><span style="color:#1b1bc4">(AA) Aguardando assinatura</span></div><div class="c bl lft" style="left:360px;width:260px;">Cliente 2220</div><div class="c bl ctr" style="left:620px;width:115px;"></div><div class="c bl ctr" style="left:735px;width:118px;">15/07/2020</div><div class="c bl ctr" style="left:853px;width:116px;"></div><div class="c bl ctr" style="left:969px;width:145px;"></div><div class="c bl ctr" style="left:1114px;width:93px;">15/07/2020</div><div class="c bl ctr" style="left:1207px;width:111px;">13</div><div class="c bl lft" style="left:1318px;width:217px;">35_MEGA_FIBRA</div><div class="c bl lft" style="left:1535px;width:239px;">Endereço</div></div>
<div class="row even" style="top:360px"><div class="c ctr idc" style="left:0px;width:58px;">2273</div><div class="c bl b1 ctr" style="left:58px;width:52px;">1</div><div class="c bl lft" style="left:110px;width:125px;"><svg class="ic" width="12" height="12" viewBox="0 0 12 12"><circle cx="6" cy="6" r="5.1" fill="none" stroke="#5cb85c" stroke-width="1.6"/><path d="M3.5 6L5.3 7.8L8.6 4.4" fill="none" stroke="#5cb85c" stroke-width="1.6"/></svg><span style="color:#5cb85c">(A) Ativo</span></div><div class="c bl lft" style="left:235px;width:125px;"><svg class="ic" width="12" height="12" viewBox="0 0 12 12"><circle cx="6" cy="6" r="5.1" fill="none" stroke="#5cb85c" stroke-width="1.6"/><path d="M3.5 6L5.3 7.8L8.6 4.4" fill="none" stroke="#5cb85c" stroke-width="1.6"/></svg><span style="color:#5cb85c">(A) Ativo</span></div><div class="c bl lft" style="left:360px;width:260px;">Cliente 2219</div><div class="c bl ctr" style="left:620px;width:115px;">15/07/2020</div><div class="c bl ctr" style="left:735px;width:118px;">15/07/2020</div><div class="c bl ctr" style="left:853px;width:116px;"></div><div class="c bl ctr" style="left:969px;width:145px;"></div><div class="c bl ctr" style="left:1114px;width:93px;">14/07/2020</div><div class="c bl ctr" style="left:1207px;width:111px;">13</div><div class="c bl lft" style="left:1318px;width:217px;">35_MEGA_FIBRA</div><div class="c bl lft" style="left:1535px;width:239px;">Endereço</div></div>
<div class="row odd" style="top:390px"><div class="c ctr idc" style="left:0px;width:58px;">2272</div><div class="c bl b1 ctr" style="left:58px;width:52px;">1</div><div class="c bl lft" style="left:110px;width:125px;"><svg class="ic" width="12" height="12" viewBox="0 0 12 12"><circle cx="6" cy="6" r="5.1" fill="none" stroke="#5cb85c" stroke-width="1.6"/><path d="M3.5 6L5.3 7.8L8.6 4.4" fill="none" stroke="#5cb85c" stroke-width="1.6"/></svg><span style="color:#5cb85c">(A) Ativo</span></div><div class="c bl lft" style="left:235px;width:125px;"><svg class="ic" width="12" height="12" viewBox="0 0 12 12"><circle cx="6" cy="6" r="5.1" fill="none" stroke="#5cb85c" stroke-width="1.6"/><path d="M3.5 6L5.3 7.8L8.6 4.4" fill="none" stroke="#5cb85c" stroke-width="1.6"/></svg><span style="color:#5cb85c">(A) Ativo</span></div><div class="c bl lft" style="left:360px;width:260px;">Cliente 2218</div><div class="c bl ctr" style="left:620px;width:115px;">15/07/2020</div><div class="c bl ctr" style="left:735px;width:118px;">15/07/2020</div><div class="c bl ctr" style="left:853px;width:116px;"></div><div class="c bl ctr" style="left:969px;width:145px;"></div><div class="c bl ctr" style="left:1114px;width:93px;">14/07/2020</div><div class="c bl ctr" style="left:1207px;width:111px;">13</div><div class="c bl lft" style="left:1318px;width:217px;">35_MEGA_FIBRA</div><div class="c bl lft" style="left:1535px;width:239px;">Endereço</div></div>
<div class="row even" style="top:420px"><div class="c ctr idc" style="left:0px;width:58px;">2271</div><div class="c bl b1 ctr" style="left:58px;width:52px;">1</div><div class="c bl lft" style="left:110px;width:125px;"><svg class="ic" width="12" height="12" viewBox="0 0 12 12"><circle cx="6" cy="6" r="5.1" fill="none" stroke="#5cb85c" stroke-width="1.6"/><path d="M3.5 6L5.3 7.8L8.6 4.4" fill="none" stroke="#5cb85c" stroke-width="1.6"/></svg><span style="color:#5cb85c">(A) Ativo</span></div><div class="c bl lft" style="left:235px;width:125px;"><svg class="ic" width="12" height="12" viewBox="0 0 12 12"><circle cx="6" cy="6" r="5.1" fill="none" stroke="#5cb85c" stroke-width="1.6"/><path d="M3.5 6L5.3 7.8L8.6 4.4" fill="none" stroke="#5cb85c" stroke-width="1.6"/></svg><span style="color:#5cb85c">(A) Ativo</span></div><div class="c bl lft" style="left:360px;width:260px;">Cliente 2217</div><div class="c bl ctr" style="left:620px;width:115px;">15/07/2020</div><div class="c bl ctr" style="left:735px;width:118px;">15/07/2020</div><div class="c bl ctr" style="left:853px;width:116px;"></div><div class="c bl ctr" style="left:969px;width:145px;"></div><div class="c bl ctr" style="left:1114px;width:93px;">14/07/2020</div><div class="c bl ctr" style="left:1207px;width:111px;">13</div><div class="c bl lft" style="left:1318px;width:217px;">35_MEGA_FIBRA</div><div class="c bl lft" style="left:1535px;width:239px;">Endereço</div></div>
<div class="row odd" style="top:450px"><div class="c ctr idc" style="left:0px;width:58px;">2270</div><div class="c bl b1 ctr" style="left:58px;width:52px;">1</div><div class="c bl lft" style="left:110px;width:125px;"><svg class="ic" width="12" height="12" viewBox="0 0 12 12"><circle cx="6" cy="6" r="5.1" fill="none" stroke="#5cb85c" stroke-width="1.6"/><path d="M3.5 6L5.3 7.8L8.6 4.4" fill="none" stroke="#5cb85c" stroke-width="1.6"/></svg><span style="color:#5cb85c">(A) Ativo</span></div><div class="c bl lft" style="left:235px;width:125px;"><svg class="ic" width="12" height="12" viewBox="0 0 12 12"><circle cx="6" cy="6" r="5.1" fill="none" stroke="#5cb85c" stroke-width="1.6"/><path d="M3.5 6L5.3 7.8L8.6 4.4" fill="none" stroke="#5cb85c" stroke-width="1.6"/></svg><span style="color:#5cb85c">(A) Ativo</span></div><div class="c bl lft" style="left:360px;width:260px;">Cliente 2216</div><div class="c bl ctr" style="left:620px;width:115px;">14/07/2020</div><div class="c bl ctr" style="left:735px;width:118px;">14/07/2020</div><div class="c bl ctr" style="left:853px;width:116px;"></div><div class="c bl ctr" style="left:969px;width:145px;"></div><div class="c bl ctr" style="left:1114px;width:93px;">13/07/2020</div><div class="c bl ctr" style="left:1207px;width:111px;">13</div><div class="c bl lft" style="left:1318px;width:217px;">35_MEGA_FIBRA</div><div class="c bl lft" style="left:1535px;width:239px;">Endereço</div></div>
<div class="row even" style="top:480px"><div class="c ctr idc" style="left:0px;width:58px;">2269</div><div class="c bl b1 ctr" style="left:58px;width:52px;">1</div><div class="c bl lft" style="left:110px;width:125px;"><svg class="ic" width="12" height="12" viewBox="0 0 12 12"><circle cx="6" cy="6" r="5.1" fill="none" stroke="#5cb85c" stroke-width="1.6"/><path d="M3.5 6L5.3 7.8L8.6 4.4" fill="none" stroke="#5cb85c" stroke-width="1.6"/></svg><span style="color:#5cb85c">(A) Ativo</span></div><div class="c bl lft" style="left:235px;width:125px;"><svg class="ic" width="12" height="12" viewBox="0 0 12 12"><circle cx="6" cy="6" r="5.1" fill="none" stroke="#5cb85c" stroke-width="1.6"/><path d="M3.5 6L5.3 7.8L8.6 4.4" fill="none" stroke="#5cb85c" stroke-width="1.6"/></svg><span style="color:#5cb85c">(A) Ativo</span></div><div class="c bl lft" style="left:360px;width:260px;">Cliente 2215</div><div class="c bl ctr" style="left:620px;width:115px;">14/07/2020</div><div class="c bl ctr" style="left:735px;width:118px;">14/07/2020</div><div class="c bl ctr" style="left:853px;width:116px;"></div><div class="c bl ctr" style="left:969px;width:145px;"></div><div class="c bl ctr" style="left:1114px;width:93px;">13/07/2020</div><div class="c bl ctr" style="left:1207px;width:111px;">13</div><div class="c bl lft" style="left:1318px;width:217px;">35_MEGA_FIBRA</div><div class="c bl lft" style="left:1535px;width:239px;">Endereço</div></div>
<div class="row odd" style="top:510px"><div class="c ctr idc" style="left:0px;width:58px;">2268</div><div class="c bl b1 ctr" style="left:58px;width:52px;">1</div><div class="c bl lft" style="left:110px;width:125px;"><svg class="ic" width="12" height="12" viewBox="0 0 12 12"><circle cx="6" cy="6" r="5.1" fill="none" stroke="#5cb85c" stroke-width="1.6"/><path d="M3.5 6L5.3 7.8L8.6 4.4" fill="none" stroke="#5cb85c" stroke-width="1.6"/></svg><span style="color:#5cb85c">(A) Ativo</span></div><div class="c bl lft" style="left:235px;width:125px;"><svg class="ic" width="12" height="12" viewBox="0 0 12 12"><circle cx="6" cy="6" r="5.1" fill="none" stroke="#5cb85c" stroke-width="1.6"/><path d="M3.5 6L5.3 7.8L8.6 4.4" fill="none" stroke="#5cb85c" stroke-width="1.6"/></svg><span style="color:#5cb85c">(A) Ativo</span></div><div class="c bl lft" style="left:360px;width:260px;">Cliente 2214</div><div class="c bl ctr" style="left:620px;width:115px;">14/07/2020</div><div class="c bl ctr" style="left:735px;width:118px;">14/07/2020</div><div class="c bl ctr" style="left:853px;width:116px;"></div><div class="c bl ctr" style="left:969px;width:145px;"></div><div class="c bl ctr" style="left:1114px;width:93px;">13/07/2020</div><div class="c bl ctr" style="left:1207px;width:111px;">16</div><div class="c bl lft" style="left:1318px;width:217px;">250_MEGA_RESIDENCIAL</div><div class="c bl lft" style="left:1535px;width:239px;">Endereço</div></div>
<div class="row even" style="top:540px"><div class="c ctr idc" style="left:0px;width:58px;">2267</div><div class="c bl b1 ctr" style="left:58px;width:52px;">1</div><div class="c bl lft" style="left:110px;width:125px;"><svg class="ic" width="12" height="12" viewBox="0 0 12 12"><circle cx="6" cy="6" r="5.1" fill="none" stroke="#5cb85c" stroke-width="1.6"/><path d="M3.5 6L5.3 7.8L8.6 4.4" fill="none" stroke="#5cb85c" stroke-width="1.6"/></svg><span style="color:#5cb85c">(A) Ativo</span></div><div class="c bl lft" style="left:235px;width:125px;"><svg class="ic" width="12" height="12" viewBox="0 0 12 12"><circle cx="6" cy="6" r="5.1" fill="none" stroke="#5cb85c" stroke-width="1.6"/><path d="M3.5 6L5.3 7.8L8.6 4.4" fill="none" stroke="#5cb85c" stroke-width="1.6"/></svg><span style="color:#5cb85c">(A) Ativo</span></div><div class="c bl lft" style="left:360px;width:260px;">Cliente 2213</div><div class="c bl ctr" style="left:620px;width:115px;">13/07/2020</div><div class="c bl ctr" style="left:735px;width:118px;">13/07/2020</div><div class="c bl ctr" style="left:853px;width:116px;"></div><div class="c bl ctr" style="left:969px;width:145px;"></div><div class="c bl ctr" style="left:1114px;width:93px;">10/07/2020</div><div class="c bl ctr" style="left:1207px;width:111px;">13</div><div class="c bl lft" style="left:1318px;width:217px;">35_MEGA_FIBRA</div><div class="c bl lft" style="left:1535px;width:239px;">Endereço</div></div>
<div class="row odd" style="top:570px"><div class="c ctr idc" style="left:0px;width:58px;">2266</div><div class="c bl b1 ctr" style="left:58px;width:52px;">1</div><div class="c bl lft" style="left:110px;width:125px;"><svg class="ic" width="12" height="12" viewBox="0 0 12 12"><circle cx="6" cy="6" r="5.1" fill="none" stroke="#5cb85c" stroke-width="1.6"/><path d="M3.5 6L5.3 7.8L8.6 4.4" fill="none" stroke="#5cb85c" stroke-width="1.6"/></svg><span style="color:#5cb85c">(A) Ativo</span></div><div class="c bl lft" style="left:235px;width:125px;"><svg class="ic" width="12" height="12" viewBox="0 0 12 12"><circle cx="6" cy="6" r="5.1" fill="none" stroke="#5cb85c" stroke-width="1.6"/><path d="M3.5 6L5.3 7.8L8.6 4.4" fill="none" stroke="#5cb85c" stroke-width="1.6"/></svg><span style="color:#5cb85c">(A) Ativo</span></div><div class="c bl lft" style="left:360px;width:260px;">Cliente 2212</div><div class="c bl ctr" style="left:620px;width:115px;">10/07/2020</div><div class="c bl ctr" style="left:735px;width:118px;">10/07/2020</div><div class="c bl ctr" style="left:853px;width:116px;"></div><div class="c bl ctr" style="left:969px;width:145px;"></div><div class="c bl ctr" style="left:1114px;width:93px;">09/07/2020</div><div class="c bl ctr" style="left:1207px;width:111px;">13</div><div class="c bl lft" style="left:1318px;width:217px;">35_MEGA_FIBRA</div><div class="c bl lft" style="left:1535px;width:239px;">Endereço</div></div>
    </div>
    <!-- h scrollbar -->
    <div class="abs" style="left:0;top:777px;width:1583px;height:18px;background:#f0f0f0"></div>
    <svg class="abs" style="left:7px;top:781px" width="5" height="9" viewBox="0 0 5 9"><path d="M5 0V9L0 4.5Z" fill="#999"/></svg>
    <svg class="abs" style="left:1571px;top:781px" width="6" height="9" viewBox="0 0 6 9"><path d="M1 0V9L6 4.5Z" fill="#333"/></svg>
    <div class="abs" style="left:18px;top:779px;width:251px;height:14px;background:#c0c0c0"></div>
    <!-- footer -->
    <div class="abs" style="right:13px;top:802px;font-size:14px;color:#f4f4f4;white-space:nowrap;letter-spacing:-0.15px">Taxa ativação:&nbsp; <b>198,00</b></div>
  </div>
</div>
</body></html>
